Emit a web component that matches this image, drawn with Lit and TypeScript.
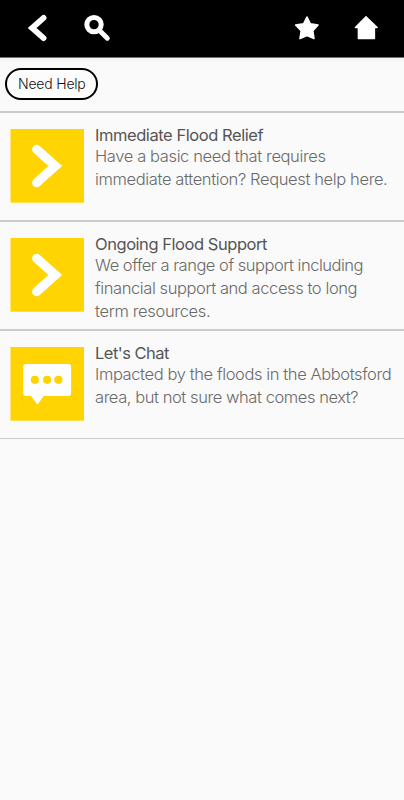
import { LitElement, html, css, svg } from "lit";
import { customElement } from "lit/decorators.js";
import { styleMap } from "lit/directives/style-map.js";

type Line = { text: string; spacing: number };
type Item = { icon: "arrow" | "chat"; title: Line; lines: Line[] };

const items: Item[] = [
  {
    icon: "arrow",
    title: { text: "Immediate Flood Relief", spacing: -0.44 },
    lines: [
      { text: "Have a basic need that requires", spacing: -0.38 },
      { text: "immediate attention? Request help here.", spacing: -0.37 },
    ],
  },
  {
    icon: "arrow",
    title: { text: "Ongoing Flood Support", spacing: -0.45 },
    lines: [
      { text: "We offer a range of support including", spacing: -0.48 },
      { text: "financial support and access to long", spacing: -0.41 },
      { text: "term resources.", spacing: -0.34 },
    ],
  },
  {
    icon: "chat",
    title: { text: "Let's Chat", spacing: -0.53 },
    lines: [
      { text: "Impacted by the floods in the Abbotsford", spacing: -0.4 },
      { text: "area, but not sure what comes next?", spacing: -0.43 },
    ],
  },
];

const arrow = svg`<path d="M26.700 20.300 45.300 37 26.700 53.700" fill="none" stroke="#fff" stroke-width="9.2" stroke-linecap="round" stroke-linejoin="miter"/>`;
const chat = svg`<g transform="translate(0.4 0)"><path d="M15.500 17H58a2.700 2.700 0 0 1 2.700 2.700V46.300a2.700 2.700 0 0 1-2.700 2.700H33.200L28 56.500a1.200 1.200 0 0 1-1.800 0L20.600 49H15.500a2.700 2.700 0 0 1-2.700-2.700V19.700A2.700 2.700 0 0 1 15.500 17Z" fill="#fff"/>
  <g fill="#ffd400"><circle cx="24.500" cy="32.800" r="4.100"/><circle cx="36.700" cy="32.800" r="4.100"/><circle cx="48" cy="32.800" r="4.100"/></g></g>`;

@customElement("app-root")
export class AppRoot extends LitElement {
  static styles = css`
    :host { display: block; height: 800px; background: #fafafa; font-family: Inter, "Liberation Sans", sans-serif; overflow: hidden; }
    header { box-sizing: border-box; height: 58px; background: #000; border-bottom: 1px solid #757071; display: flex; justify-content: space-between; }
    .group { display: flex; }
    header svg { display: block; width: 60px; height: 57px; }
    .bar { box-sizing: border-box; height: 55px; padding: 10px 5px; border-bottom: 2px solid #cbcbcb; background: linear-gradient(#f3f3f3, #fafafa 5px); }
    .pill { box-sizing: border-box; width: 93px; height: 31.5px; border: 2px solid #000; border-radius: 16px; background: #fcfcfc; font-size: 14px; font-weight: 300; line-height: 28px; padding-left: 11px; letter-spacing: -0.2px; color: #111; white-space: nowrap; }
    .row { box-sizing: border-box; height: 109px; padding: 16px 0 0 10px; border-bottom: 2px solid #cbcbcb; display: flex; gap: 11px; }
    .row:last-child { height: 108px; border-bottom-width: 1px; }
    .tile { flex: none; width: 74px; height: 74px; }
    .text { white-space: nowrap; color: #6a6a6a; font-size: 16.5px; font-weight: 300; line-height: 23px; }
    .title { color: #555; font-weight: 400; line-height: 21px; margin-top: -4px; margin-bottom: -1px; }
  `;
  private line(l: Line) {
    return html`<span style=${styleMap({ letterSpacing: `${l.spacing}px` })}>${l.text}</span>`;
  }
  render() {
    return html`
      <header>
        <div class="group">
          <svg viewBox="0 0 60 57"><path d="M43.600 17.800 32.100 28 43.600 38.200" fill="none" stroke="#fff" stroke-width="5.8" stroke-linecap="round"/></svg>
          <svg viewBox="60 0 60 57"><circle cx="94" cy="24.600" r="7.200" fill="none" stroke="#fff" stroke-width="5"/><path d="M99.500 30.500 107.300 38.200" stroke="#fff" stroke-width="5" stroke-linecap="round"/></svg>
        </div>
        <div class="group">
          <svg viewBox="284 0 60 57"><path d="M307 17 310.300 23.800 318 25 312.800 30.800 314 38.500 307 35.400 300 38.500 301.200 30.800 295.600 25 303.600 23.800Z" fill="#fff" stroke="#fff" stroke-width="1.6" stroke-linejoin="round"/></svg>
          <svg viewBox="344 0 60 57"><path d="M366 16.600 377.200 27.500H374.500V38.500H358.300V27.500H355.300Z" fill="#fff" stroke="#fff" stroke-width="1.3" stroke-linejoin="round"/></svg>
        </div>
      </header>
      <div class="bar"><div class="pill">Need Help</div></div>
      <main>
        ${items.map((i) => html`
          <section class="row">
            <svg class="tile" viewBox="0 0 74 74"><rect x="0.500" width="73.500" height="73.700" fill="#ffd400"/>${i.icon === "arrow" ? arrow : chat}</svg>
            <div class="text">
              <div class="title">${this.line(i.title)}</div>
              ${i.lines.map((l) => html`<div>${this.line(l)}</div>`)}
            </div>
          </section>`)}
      </main>`;
  }
}
